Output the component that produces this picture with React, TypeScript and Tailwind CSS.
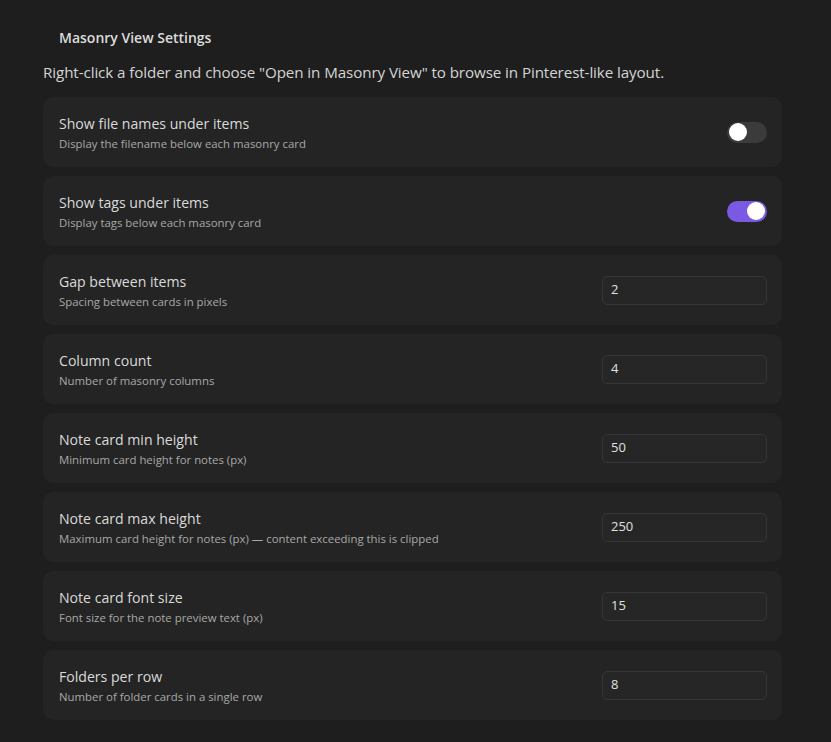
import React from "react";

type Row =
  | { kind: "toggle"; title: string; desc: string; on: boolean }
  | { kind: "input"; title: string; desc: string; value: string };

const rows: Row[] = [
  { kind: "toggle", title: "Show file names under items", desc: "Display the filename below each masonry card", on: false },
  { kind: "toggle", title: "Show tags under items", desc: "Display tags below each masonry card", on: true },
  { kind: "input", title: "Gap between items", desc: "Spacing between cards in pixels", value: "2" },
  { kind: "input", title: "Column count", desc: "Number of masonry columns", value: "4" },
  { kind: "input", title: "Note card min height", desc: "Minimum card height for notes (px)", value: "50" },
  { kind: "input", title: "Note card max height", desc: "Maximum card height for notes (px) \u2014 content exceeding this is clipped", value: "250" },
  { kind: "input", title: "Note card font size", desc: "Font size for the note preview text (px)", value: "15" },
  { kind: "input", title: "Folders per row", desc: "Number of folder cards in a single row", value: "8" },
];

function Toggle({ on }: { on: boolean }) {
  return (
    <div
      className={
        "flex h-[21px] w-[40px] items-center rounded-full px-[2px] " +
        (on ? "justify-end bg-[#7b5ae3]" : "justify-start bg-[#3b3b3b]")
      }
    >
      <div className="h-[18px] w-[18px] rounded-full bg-white" />
    </div>
  );
}

export default function App() {
  return (
    <div
      className="min-h-[742px] w-full bg-[#1e1e1e] pl-[43px] pr-[49px] pt-[28px] text-[#dadada]"
      style={{ fontFamily: '"Open Sans", "Noto Sans", sans-serif' }}
    >
      <div className="pl-[16px] text-[14px] font-semibold leading-[20px] text-[#dcdcdc]">Masonry View Settings</div>
      <div className="mt-[14px] text-[15.2px] leading-[20px] tracking-[-0.1px] text-[#d4d4d4]">
        Right-click a folder and choose "Open in Masonry View" to browse in Pinterest-like layout.
      </div>
      <div className="mt-[15px] flex flex-col gap-[9px]">
        {rows.map((r) => (
          <div
            key={r.title}
            className="flex h-[70px] items-center justify-between rounded-[10px] bg-[#242424] pl-[16px] pr-[15px]"
          >
            <div className="flex flex-col pt-[1px]">
              <div className="text-[14.1px] leading-[20px] text-[#dadada]">{r.title}</div>
              <div className="mt-[2px] text-[11.4px] leading-[16px] text-[#a8a8a8]">{r.desc}</div>
            </div>
            {r.kind === "toggle" ? (
              <Toggle on={r.on} />
            ) : (
              <div className="flex h-[29px] w-[165px] items-center rounded-[5px] border border-[#363636] bg-[#262626] px-[8px] text-[13px] text-[#e0e0e0]">
                {r.value}
              </div>
            )}
          </div>
        ))}
      </div>
    </div>
  );
}
